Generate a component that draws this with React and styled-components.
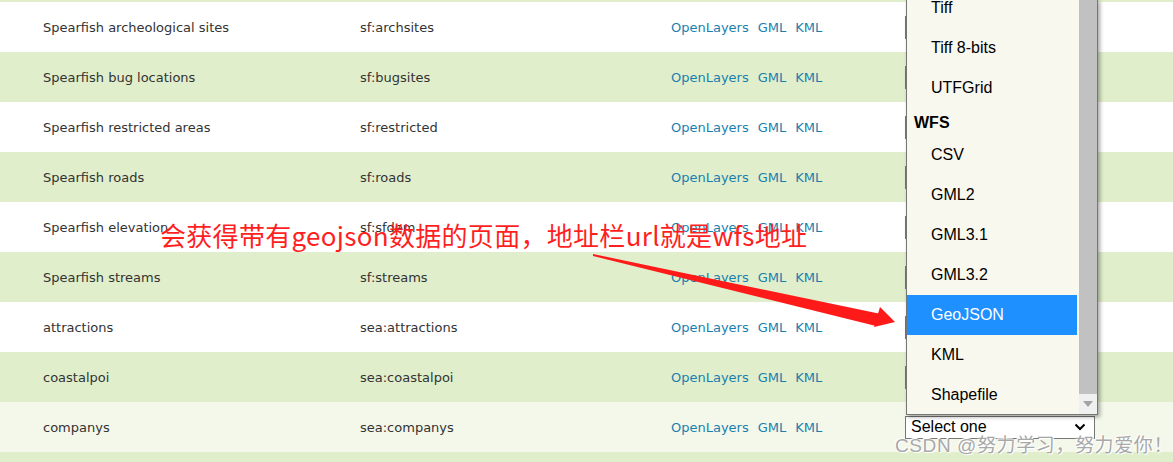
import styled, { createGlobalStyle } from "styled-components";

const GlobalStyle = createGlobalStyle`
  html, body {
    margin: 0;
    padding: 0;
    background: #fff;
    overflow: hidden;
  }
  body {
    font-family: "Liberation Sans", Arial, sans-serif;
  }
`;

const layers = [
  { title: "", name: "" },
  { title: "Spearfish archeological sites", name: "sf:archsites" },
  { title: "Spearfish bug locations", name: "sf:bugsites" },
  { title: "Spearfish restricted areas", name: "sf:restricted" },
  { title: "Spearfish roads", name: "sf:roads" },
  { title: "Spearfish elevation", name: "sf:sfdem" },
  { title: "Spearfish streams", name: "sf:streams" },
  { title: "attractions", name: "sea:attractions" },
  { title: "coastalpoi", name: "sea:coastalpoi" },
  { title: "companys", name: "sea:companys", hover: true },
  { title: "", name: "" },
];

const options = [
  { label: "Tiff" },
  { label: "Tiff 8-bits" },
  { label: "UTFGrid" },
  { label: "WFS", group: true },
  { label: "CSV" },
  { label: "GML2" },
  { label: "GML3.1" },
  { label: "GML3.2" },
  { label: "GeoJSON", selected: true },
  { label: "KML" },
  { label: "Shapefile" },
];

const Page = styled.div`
  position: relative;
  width: 1173px;
  height: 462px;
  overflow: hidden;
`;

const Table = styled.div`
  margin-top: -48px;
`;

const Row = styled.div`
  display: grid;
  grid-template-columns: 317px 311px 234px 1fr;
  align-items: center;
  height: 50px;
  padding-left: 43px;
  background: ${(p) => (p.hover ? "#f4f8ea" : p.odd ? "#e0eecb" : "#ffffff")};
  font-family: "DejaVu Sans", Tahoma, sans-serif;
  font-size: 13px;
  color: #333;
`;

const Cell = styled.div`
  white-space: nowrap;
`;

const Links = styled.div`
  display: flex;
  gap: 9px;
  white-space: nowrap;

  a {
    color: #1a7fae;
    text-decoration: none;
  }
`;

const SelectBox = styled.div`
  box-sizing: border-box;
  width: 190px;
  height: 23px;
  border: 1px solid #767676;
  background: #fff;
  display: flex;
  align-items: center;
  justify-content: space-between;
  padding: 0 8px 0 5px;
  font-family: "Liberation Sans", Arial, sans-serif;
  font-size: 16px;
  color: #000;
`;

const Dropdown = styled.div`
  position: absolute;
  left: 906px;
  top: -1px;
  width: 192px;
  height: 416px;
  box-sizing: border-box;
  border: 1px solid #767676;
  background: #f8f8ef;
  box-shadow: 2px 2px 4px rgba(0, 0, 0, 0.35);
  display: flex;
  overflow: hidden;
  font-family: "Liberation Sans", Arial, sans-serif;
  font-size: 16px;
  color: #000;
`;

const List = styled.div`
  flex: 1;
  margin-top: -12px;
`;

const Option = styled.div`
  height: ${(p) => (p.group ? "27px" : "40px")};
  line-height: ${(p) => (p.group ? "30px" : "40px")};
  padding-left: ${(p) => (p.group ? "7px" : "24px")};
  font-weight: ${(p) => (p.group ? 700 : 400)};
  background: ${(p) => (p.selected ? "#1e90ff" : "transparent")};
  color: ${(p) => (p.selected ? "#fff" : "#000")};
  margin-right: 2px;
`;

const Scrollbar = styled.div`
  width: 18px;
  display: flex;
  flex-direction: column;
  background: #f0f0f0;
`;

const Thumb = styled.div`
  flex: 1;
  background: #c1c1c1;
`;

const ScrollArrow = styled.div`
  height: 20px;
  display: flex;
  align-items: center;
  justify-content: center;
`;

const Annotation = styled.div`
  position: absolute;
  left: 160px;
  top: 218px;
  font-family: "Noto Sans CJK SC", sans-serif;
  font-size: 26px;
  line-height: 34px;
  color: #ff1f1f;
  white-space: nowrap;
  letter-spacing: 0.3px;
`;

const Arrow = styled.svg`
  position: absolute;
  left: 0;
  top: 0;
  pointer-events: none;
`;

const Watermark = styled.div`
  position: absolute;
  left: 895px;
  top: 430px;
  font-family: "Liberation Sans", "Noto Sans CJK SC", sans-serif;
  font-size: 19px;
  letter-spacing: 0.6px;
  color: #a8a8a8;
  white-space: nowrap;
  text-shadow: 0 0 1px #fff, 1px 1px 0 #fff, -1px -1px 0 #fff;
`;

export default function App() {
  return (
    <Page>
      <GlobalStyle />
      <Table>
        {layers.map((l, i) => (
          <Row key={i} odd={i % 2 === 0} hover={l.hover}>
            <Cell>{l.title}</Cell>
            <Cell>{l.name}</Cell>
            {l.name ? (
              <Links>
                <a href="#">OpenLayers</a>
                <a href="#">GML</a>
                <a href="#">KML</a>
              </Links>
            ) : (
              <div />
            )}
            {l.name ? (
              <SelectBox>
                <span>Select one</span>
                <svg width="12" height="8" viewBox="0 0 12 8">
                  <path d="M1.5 1.5 L6 6 L10.5 1.5" fill="none" stroke="#000" strokeWidth="2" />
                </svg>
              </SelectBox>
            ) : (
              <div />
            )}
          </Row>
        ))}
      </Table>

      <Dropdown>
        <List>
          {options.map((o) => (
            <Option key={o.label} group={o.group} selected={o.selected}>
              {o.label}
            </Option>
          ))}
        </List>
        <Scrollbar>
          <Thumb />
          <ScrollArrow>
            <svg width="10" height="6" viewBox="0 0 10 6">
              <path d="M0 0 L10 0 L5 6 Z" fill="#a3a3a3" />
            </svg>
          </ScrollArrow>
        </Scrollbar>
      </Dropdown>

      <Annotation>会获得带有geojson数据的页面，地址栏url就是wfs地址</Annotation>

      <Arrow width="1173" height="462" viewBox="0 0 1173 462">
        <polygon points="593,254 881,314 876,326 593,256" fill="#ff1a1a" />
        <polygon points="880,307 895,322 874,327" fill="#ff1a1a" />
      </Arrow>

      <Watermark>CSDN @努力学习，努力爱你！</Watermark>
    </Page>
  );
}
